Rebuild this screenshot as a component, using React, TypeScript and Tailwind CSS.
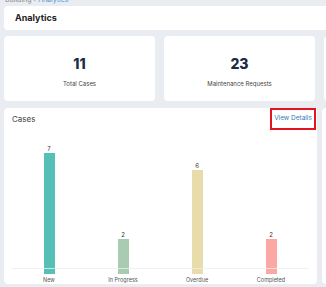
import React from "react";

const bars = [
    { label: "New", value: 7, h: "h-[121px]", color: "bg-[#57c0b6]" },
    { label: "In Progress", value: 2, h: "h-[35px]", color: "bg-[#a9cbb1]" },
    { label: "Overdue", value: 6, h: "h-[104px]", color: "bg-[#e9dcab]" },
    { label: "Completed", value: 2, h: "h-[35px]", color: "bg-[#fba8a4]" },
];

const StatCard = ({ value, label }: { value?: string; label?: string }) => (
    <div className="w-[151px] h-[65px] shrink-0 bg-white rounded-[4px] flex flex-col items-center pt-[21px]">
        {value && <div className="text-[14px] leading-[14px] font-extrabold text-[#1c2b45]">{value}</div>}
        {label && <div className="mt-[9px] text-[6px] leading-[7px] text-[#444]">{label}</div>}
    </div>
);

const App: React.FC = () => {
    return (
        <div className="w-[326px] h-[287px] overflow-hidden bg-[#e9ecf1] font-['Inter',sans-serif]">
            {/* Breadcrumb, cut off at the top */}
            <div className="h-[6px] overflow-hidden pl-[5px]">
                <div className="-mt-[4px] text-[7px] leading-[8px] text-[#888]">
                    Building <span className="text-[#4a9bd0]">› Analytics</span>
                </div>
            </div>

            {/* Page title */}
            <div className="ml-[4px] mr-[-10px] h-[24px] bg-white rounded-[4px] flex items-center pl-[11px]">
                <h2 className="text-[9px] font-bold text-[#222]">Analytics</h2>
            </div>

            {/* Stat cards */}
            <div className="flex gap-[9px] pl-[4px] mt-[6px]">
                <StatCard value="11" label="Total Cases" />
                <StatCard value="23" label="Maintenance Requests" />
                <StatCard />
            </div>

            {/* Chart card */}
            <div className="flex gap-[5px] pl-[4px] mt-[7px]">
                <div className="w-[313px] h-[176px] shrink-0 bg-white rounded-[4px] flex flex-col">
                    <div className="flex items-center justify-between h-[22px]">
                        <span className="pl-[8px] text-[8px] text-[#444]">Cases</span>
                        <button className="w-[46px] h-[22px] mr-[1px] border-2 border-[#e3141f] flex items-center justify-center text-[6.5px] text-[#2f7dbd]">
                            View Details
                        </button>
                    </div>
                    <div className="px-[8px] mt-[14px]">
                        <div className="relative flex items-end h-[130px]">
                            {bars.map((b) => (
                                <div key={b.label} className="w-[74px] flex flex-col items-center justify-end">
                                    <span className="text-[6px] leading-[6px] text-[#333] mb-[1px]">{b.value}</span>
                                    <div className={`w-[11px] ${b.h} ${b.color}`} />
                                </div>
                            ))}
                            <div className="absolute left-0 right-0 bottom-[5px] h-px bg-[#eceef1]/80" />
                        </div>
                        <div className="flex mt-[3px]">
                            {bars.map((b) => (
                                <div key={b.label} className="w-[74px] text-center text-[5.5px] leading-[6px] text-[#555]">
                                    {b.label}
                                </div>
                            ))}
                        </div>
                    </div>
                </div>
                <div className="w-[100px] h-[176px] shrink-0 bg-white rounded-[4px]" />
            </div>
        </div>
    );
};

export default App;
